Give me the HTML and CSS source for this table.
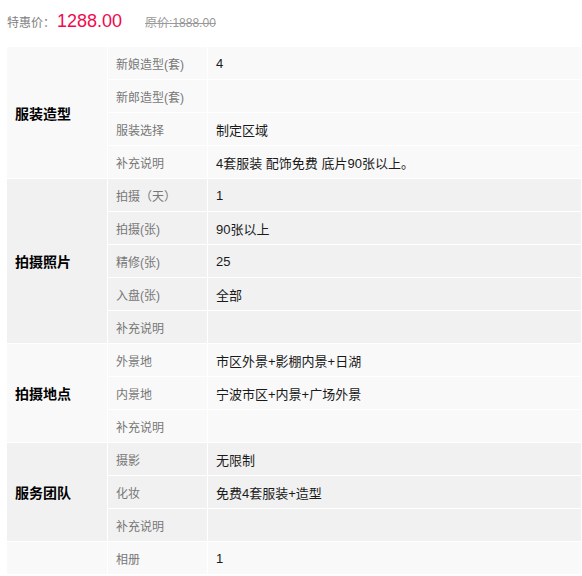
FILE: index.html
```html
<!DOCTYPE html>
<html lang="zh">
<head>
<meta charset="utf-8">
<link rel="stylesheet" href="styles.css">
</head>
<body>
<div class="page">
  <div class="price">
    <span class="price-label">特惠价：</span><span class="price-now">1288.00</span><span class="price-old">原价:1888.00</span>
  </div>
  <table class="spec">
    <colgroup>
      <col class="c1"><col class="c2"><col class="c3">
    </colgroup>
    <tbody class="light">
      <tr><th rowspan="4">服装造型</th><td class="k">新娘造型(套)</td><td class="v">4</td></tr>
      <tr><td class="k">新郎造型(套)</td><td class="v"></td></tr>
      <tr><td class="k">服装选择</td><td class="v">制定区域</td></tr>
      <tr><td class="k">补充说明</td><td class="v">4套服装 配饰免费 底片90张以上。</td></tr>
    </tbody>
    <tbody class="dark">
      <tr><th rowspan="5">拍摄照片</th><td class="k">拍摄（天）</td><td class="v">1</td></tr>
      <tr><td class="k">拍摄(张)</td><td class="v">90张以上</td></tr>
      <tr><td class="k">精修(张)</td><td class="v">25</td></tr>
      <tr><td class="k">入盘(张)</td><td class="v">全部</td></tr>
      <tr><td class="k">补充说明</td><td class="v"></td></tr>
    </tbody>
    <tbody class="light">
      <tr><th rowspan="3">拍摄地点</th><td class="k">外景地</td><td class="v">市区外景+影棚内景+日湖</td></tr>
      <tr><td class="k">内景地</td><td class="v">宁波市区+内景+广场外景</td></tr>
      <tr><td class="k">补充说明</td><td class="v"></td></tr>
    </tbody>
    <tbody class="dark">
      <tr><th rowspan="3">服务团队</th><td class="k">摄影</td><td class="v">无限制</td></tr>
      <tr><td class="k">化妆</td><td class="v">免费4套服装+造型</td></tr>
      <tr><td class="k">补充说明</td><td class="v"></td></tr>
    </tbody>
    <tbody class="light">
      <tr><th></th><td class="k">相册</td><td class="v">1</td></tr>
    </tbody>
  </table>
</div>
</body>
</html>
```

FILE: styles.css
```css
html, body {
  margin: 0;
  padding: 0;
  background: #ffffff;
}

body {
  font-family: "Liberation Sans", Arial, "Noto Sans CJK SC", sans-serif;
}

.page {
  padding-left: 6px;
}

.price {
  height: 24px;
  line-height: 24px;
  padding-top: 9px;
  padding-left: 1px;
  white-space: nowrap;
  overflow: hidden;
}

.price-label {
  font-size: 12px;
  color: #808080;
  line-height: 24px;
}

.price-now {
  font-size: 18px;
  color: #f2084e;
  margin-left: 2px;
  line-height: 24px;
}

.price-old {
  font-size: 12px;
  color: #999999;
  text-decoration: line-through;
  margin-left: 23px;
  line-height: 24px;
}

.spec {
  margin-top: 13px;
  width: 576px;
  border-collapse: separate;
  border-spacing: 1px;
  background: #ffffff;
  table-layout: fixed;
}

.c1 { width: 100px; }
.c2 { width: 99px; }

.spec th,
.spec td {
  height: 32px;
  padding: 0 0 0 8px;
  text-align: left;
  vertical-align: middle;
  white-space: nowrap;
  font-family: "Liberation Sans", Arial, "Noto Sans CJK SC", sans-serif;
}

.spec th {
  font-size: 14px;
  font-weight: bold;
  color: #000000;
}

.spec .k {
  font-size: 12px;
  color: #777777;
}

.spec .v {
  font-size: 13px;
  color: #1a1a1a;
}

.light th,
.light td {
  background: #f9f9f9;
}

.dark th,
.dark td {
  background: #f1f1f1;
}
```
